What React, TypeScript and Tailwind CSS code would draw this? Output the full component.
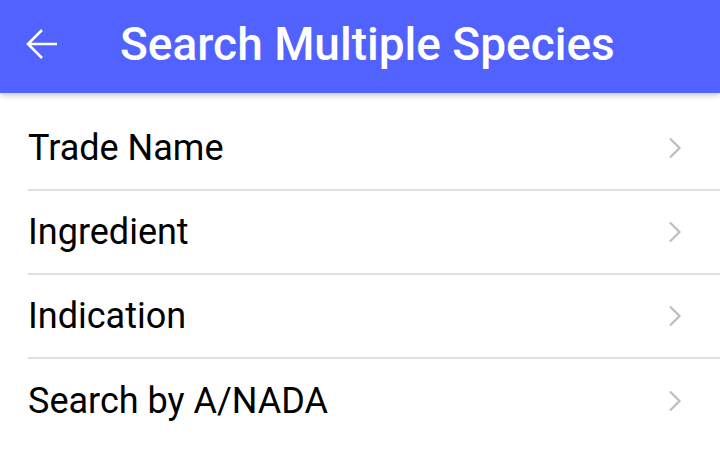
const items = ["Trade Name", "Ingredient", "Indication", "Search by A/NADA"];

function Chevron() {
  return (
    <svg width="14" height="22" viewBox="0 0 14 22" fill="none" className="mr-[38px]">
      <path d="M2 1.5 L11.5 11 L2 20.5" stroke="#bdbdbd" strokeWidth="2.2" />
    </svg>
  );
}

export default function App() {
  return (
    <div className="w-[720px] h-[470px] bg-white overflow-hidden" style={{ fontFamily: "Roboto, sans-serif" }}>
      <header className="relative z-10 h-[93px] pb-[6px] bg-[#5262fe] flex items-center shadow-[0_2px_6px_rgba(0,0,0,0.25)]">
        <svg width="32" height="32" viewBox="0 0 32 32" className="ml-[26px]" fill="none">
          <path d="M31 16H2.5M16 2L2 16l14 14" stroke="white" strokeWidth="2.6" />
        </svg>
        <h1 className="ml-[62px] text-white text-[46px] leading-none font-medium">Search Multiple Species</h1>
      </header>
      <ul className="pt-[14px] pl-[28px]">
        {items.map((it, i) => (
          <li
            key={it}
            className={`h-[84px] flex items-center justify-between ${i < items.length - 1 ? "border-b-2 border-[#e0e0e0]" : ""}`}
          >
            <span className="text-[36px] text-black">{it}</span>
            <Chevron />
          </li>
        ))}
      </ul>
    </div>
  );
}
